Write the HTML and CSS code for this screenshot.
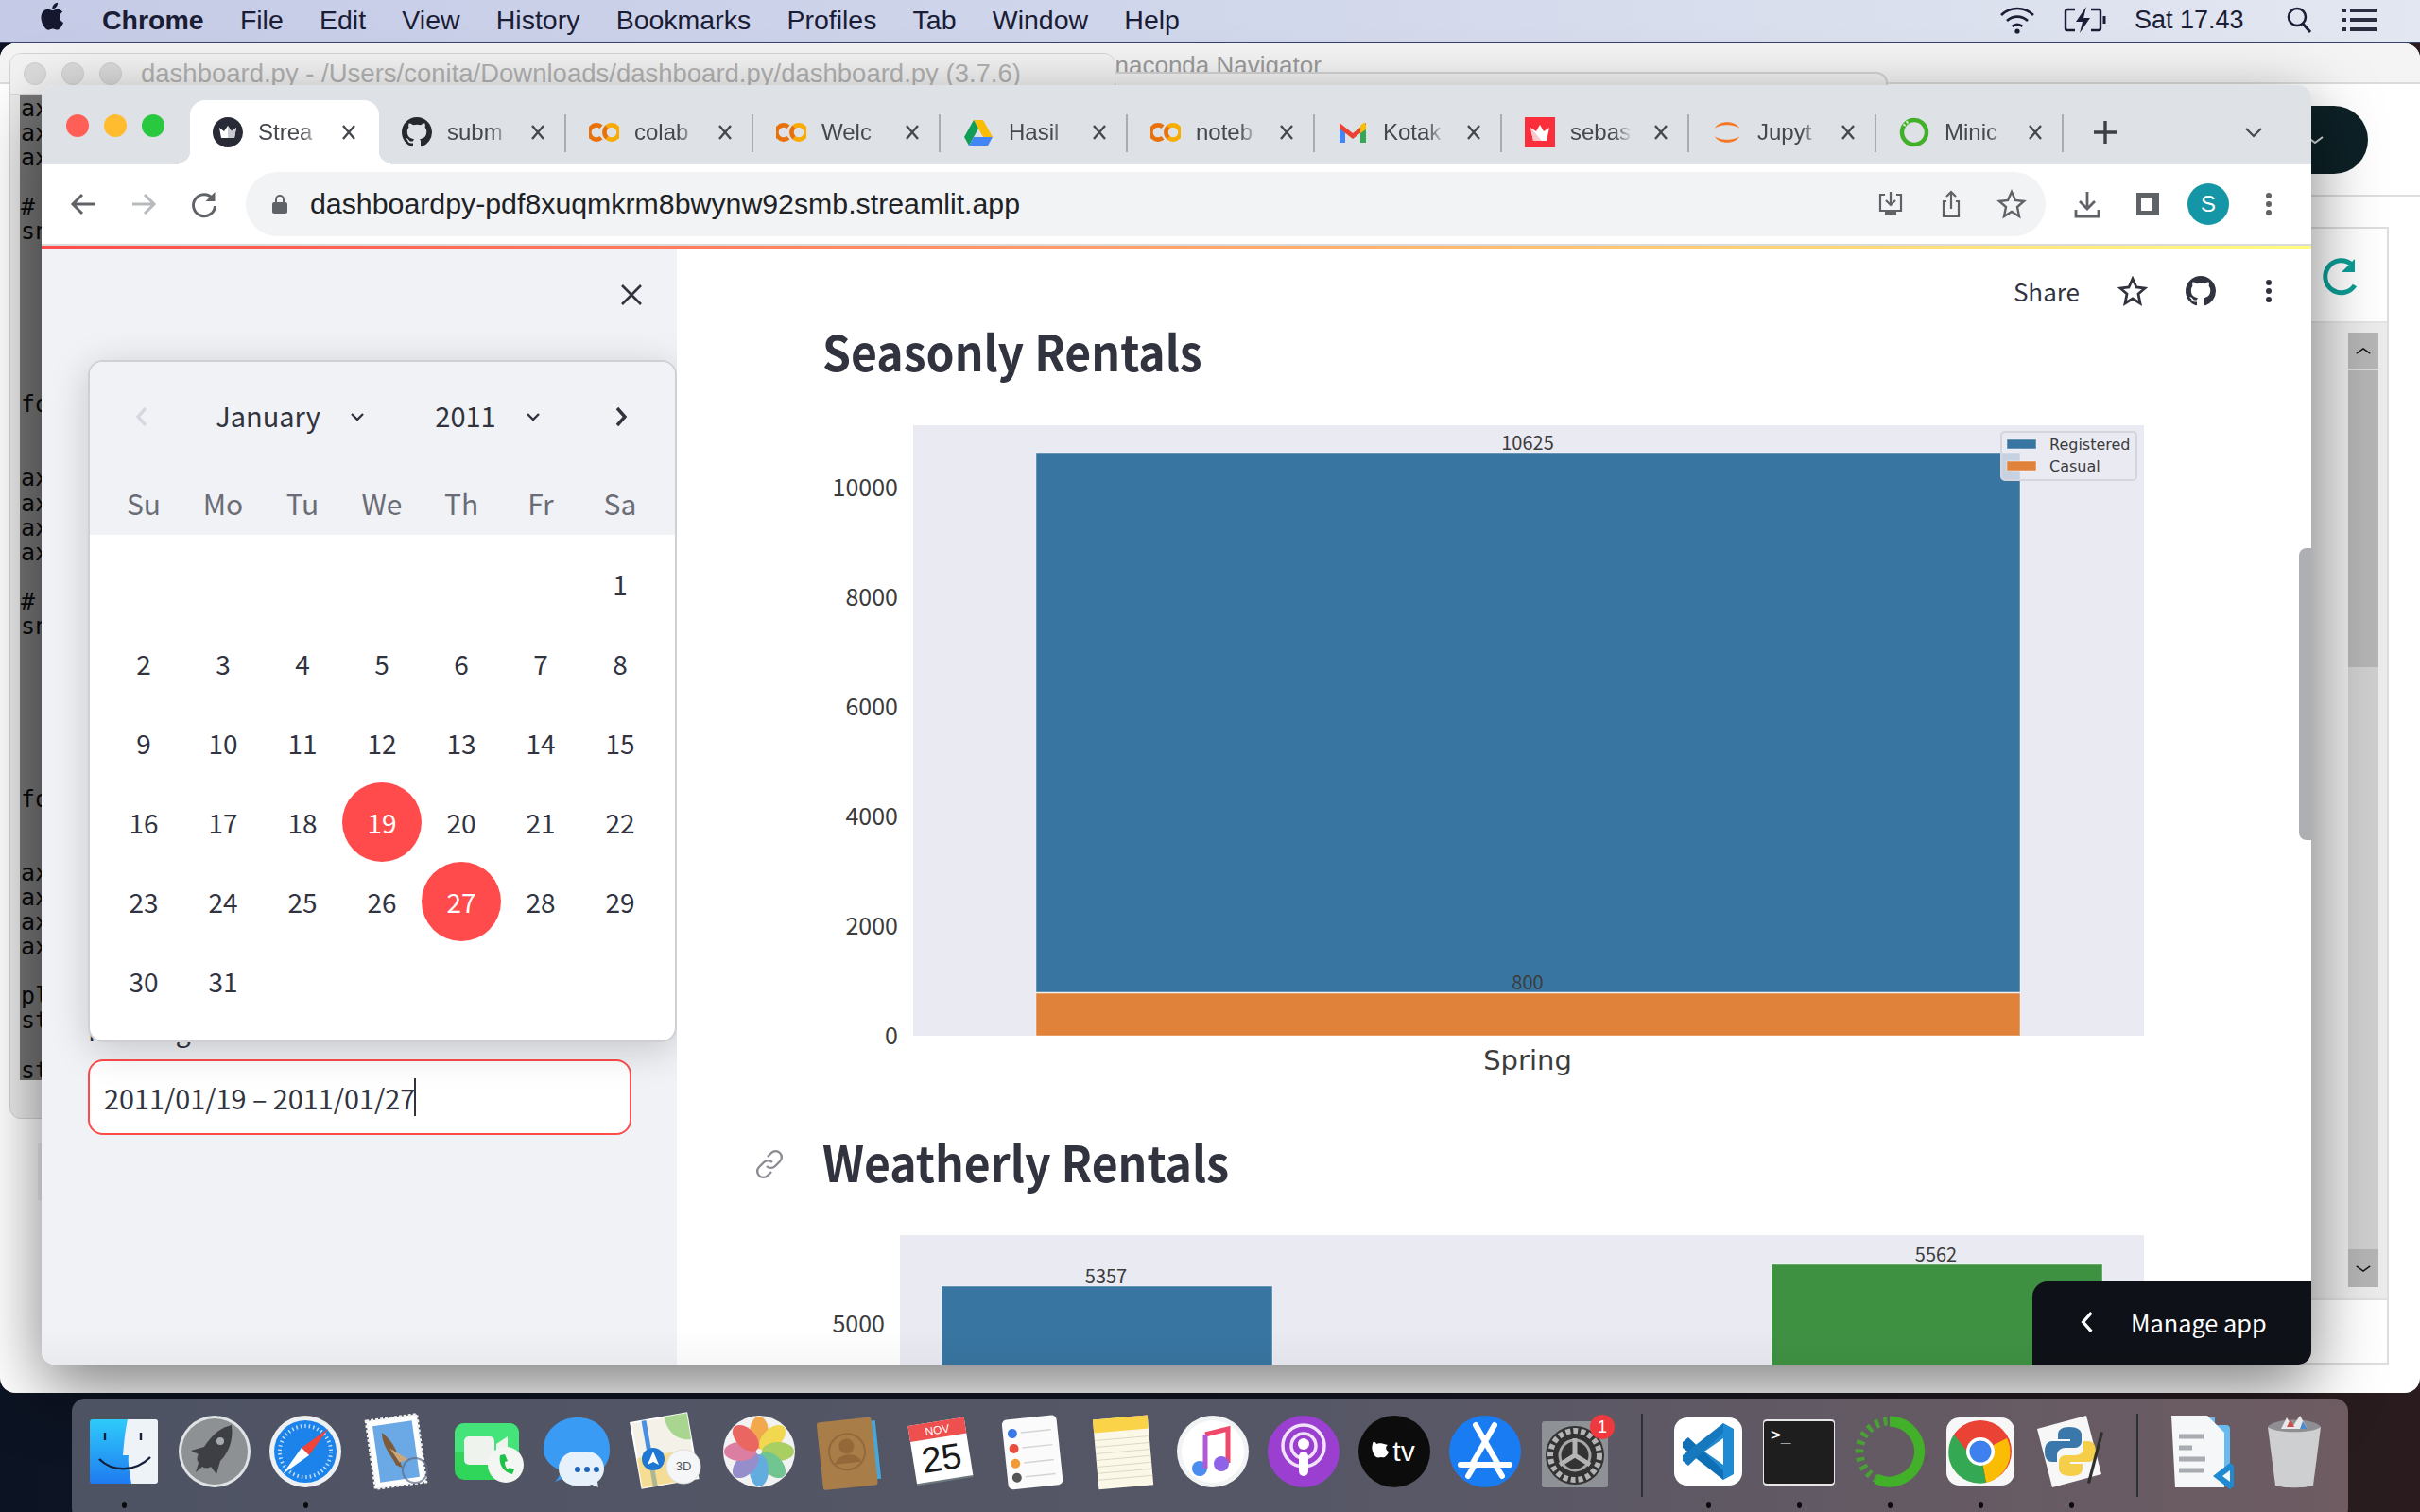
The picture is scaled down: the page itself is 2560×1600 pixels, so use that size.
FILE: index.html
```html
<!DOCTYPE html>
<html lang="en">
<head>
<meta charset="utf-8">
<title>Seasonly Rentals dashboard</title>
<link rel="stylesheet" href="styles.css">
</head>
<body>
<svg class="defs" width="0" height="0" aria-hidden="true">
  <symbol id="gh" viewBox="0 0 16 16"><path d="M8 0C3.58 0 0 3.58 0 8c0 3.54 2.29 6.53 5.47 7.59.4.07.55-.17.55-.38 0-.19-.01-.82-.01-1.49-2.01.37-2.53-.49-2.69-.94-.09-.23-.48-.94-.82-1.13-.28-.15-.68-.52-.01-.53.63-.01 1.08.58 1.23.82.72 1.21 1.87.87 2.33.66.07-.52.28-.87.51-1.07-1.78-.2-3.64-.89-3.64-3.95 0-.87.31-1.59.82-2.15-.08-.2-.36-1.02.08-2.12 0 0 .67-.21 2.2.82.64-.18 1.32-.27 2-.27.68 0 1.36.09 2 .27 1.53-1.04 2.2-.82 2.2-.82.44 1.1.16 1.92.08 2.12.51.56.82 1.27.82 2.15 0 3.07-1.87 3.75-3.65 3.95.29.25.54.73.54 1.48 0 1.07-.01 1.93-.01 2.2 0 .21.15.46.55.38A8.013 8.013 0 0016 8c0-4.42-3.58-8-8-8z"/></symbol>
  <symbol id="co" viewBox="0 0 32 32"><g fill="none" stroke-width="4.6"><path d="M13 10.3a7.6 7.6 0 1 0 0 11.4" stroke="#e8710a"/><path d="M19 10.3a7.6 7.6 0 1 1 0 11.4" stroke="#f9ab00"/><path d="M19 10.3a7.6 7.6 0 0 0 0 11.4" stroke="#e8710a"/></g></symbol>
  <symbol id="x" viewBox="0 0 20 20"><path d="M4 3l12 14M16 3L4 17" fill="none" stroke="#45484d" stroke-width="2.4"/></symbol>
</svg>

<header class="menubar">
  <svg class="apple" viewBox="0 0 24 24"><path d="M17.05 12.04c-.03-2.58 2.11-3.82 2.2-3.88-1.2-1.76-3.07-2-3.74-2.03-1.59-.16-3.11.94-3.91.94-.81 0-2.05-.92-3.37-.89-1.73.03-3.33 1.01-4.23 2.56-1.8 3.13-.46 7.77 1.3 10.31.86 1.24 1.88 2.64 3.22 2.59 1.29-.05 1.78-.84 3.34-.84 1.56 0 2 .84 3.37.81 1.39-.02 2.27-1.26 3.12-2.51.98-1.44 1.39-2.83 1.41-2.9-.03-.01-2.71-1.04-2.74-4.16zM14.5 4.46c.71-.86 1.19-2.06 1.06-3.25-1.02.04-2.26.68-3 1.54-.66.76-1.23 1.98-1.08 3.15 1.14.09 2.31-.58 3.02-1.44z"/></svg>
  <nav class="menus">
    <span class="menu-app">Chrome</span><span>File</span><span>Edit</span><span>View</span><span>History</span><span>Bookmarks</span><span>Profiles</span><span>Tab</span><span>Window</span><span>Help</span>
  </nav>
  <div class="status">
    <svg class="st-wifi" viewBox="0 0 40 32"><g fill="none" stroke="#1a1d35" stroke-width="2.6"><path d="M3 11a24 24 0 0 1 34 0"/><path d="M9 17a16 16 0 0 1 22 0"/><path d="M14.5 23a8 8 0 0 1 11 0"/></g><circle cx="20" cy="28" r="2.6" fill="#1a1d35"/></svg>
    <svg class="st-batt" viewBox="0 0 48 32"><path d="M13 5H5a2 2 0 0 0-2 2v18a2 2 0 0 0 2 2h8M30 5h8a2 2 0 0 1 2 2v18a2 2 0 0 1-2 2h-8" fill="none" stroke="#1a1d35" stroke-width="2.4"/><path d="M25 2L14 18h7l-3 12 11-16h-7z" fill="#1a1d35"/><path d="M44 12v8" stroke="#1a1d35" stroke-width="3"/></svg>
    <span class="st-time">Sat 17.43</span>
    <svg class="st-search" viewBox="0 0 28 30"><circle cx="12" cy="12" r="9" fill="none" stroke="#1a1d35" stroke-width="2.6"/><path d="M18 19l8 9" stroke="#1a1d35" stroke-width="3"/></svg>
    <svg class="st-list" viewBox="0 0 36 28"><g fill="#2a2d40"><rect x="0" y="2" width="4" height="4"/><rect x="8" y="2" width="28" height="4"/><rect x="0" y="12" width="4" height="4"/><rect x="8" y="12" width="28" height="4"/><rect x="0" y="22" width="4" height="4"/><rect x="8" y="22" width="28" height="4"/></g></svg>
  </div>
</header>

<section class="win-nav">
  <div class="win-nav-title">Anaconda Navigator</div>
  <div class="nav-sliver"></div>
  <div class="win-nav-body">
    <div class="nav-right">
      <div class="nav-pill"><svg viewBox="0 0 20 10"><path d="M2 2l8 6 8-6" fill="none" stroke="#d8dee0" stroke-width="2"/></svg></div>
      <div class="nav-rule"></div>
      <div class="nav-panel">
        <div class="nav-panel-top">
          <svg viewBox="0 0 40 42"><path d="M33 8A17 17 0 1 0 36 30" fill="none" stroke="#0d9e97" stroke-width="5"/><path d="M36 2v14H22z" fill="#0d9e97"/></svg>
        </div>
        <div class="nav-panel-mid">
          <div class="nav-scroll">
            <div class="nav-scroll-btn"><svg viewBox="0 0 20 10"><path d="M2 8l8-6 8 6" fill="none" stroke="#111" stroke-width="1.6"/></svg></div>
            <div class="nav-scroll-thumb"></div>
            <div class="nav-scroll-btn nav-scroll-btn--end"><svg viewBox="0 0 20 10"><path d="M2 2l8 6 8-6" fill="none" stroke="#111" stroke-width="1.6"/></svg></div>
          </div>
        </div>
      </div>
    </div>
  </div>
</section>

<section class="win-mid"></section>

<section class="win-idle">
  <div class="idle-title">
    <i class="idle-light"></i><i class="idle-light"></i><i class="idle-light"></i>
    <span class="idle-text">dashboard.py - /Users/conita/Downloads/dashboard.py/dashboard.py (3.7.6)</span>
  </div>
  <pre class="idle-code">ax
ax
ax

#
sn






fo


ax
ax
ax
ax

#
sn






fo


ax
ax
ax
ax

pl
st

st</pre>
</section>

<main class="chrome">
  <div class="tabstrip">
    <div class="lights"><i class="light light--r"></i><i class="light light--y"></i><i class="light light--g"></i></div>
    <div class="tabs">
      <div class="tab tab--active">
        <svg class="fav" viewBox="0 0 32 32"><circle cx="16" cy="16" r="16" fill="#282a36"/><path d="M7 11l5 4 4-6 4 6 5-4-2 11H9z" fill="#fff"/><path d="M16 9l4 6 5-4-2 11h-7z" fill="#c9c9d2"/></svg>
        <span class="tab-title">Strea</span>
        <svg class="tab-x"><use href="#x"/></svg>
      </div>
      <div class="tab">
        <svg class="fav fav--gh"><use href="#gh"/></svg>
        <span class="tab-title">subm</span>
        <svg class="tab-x"><use href="#x"/></svg>
      </div>
      <div class="tab">
        <svg class="fav"><use href="#co"/></svg>
        <span class="tab-title">colab</span>
        <svg class="tab-x"><use href="#x"/></svg>
      </div>
      <div class="tab">
        <svg class="fav"><use href="#co"/></svg>
        <span class="tab-title">Welc</span>
        <svg class="tab-x"><use href="#x"/></svg>
      </div>
      <div class="tab">
        <svg class="fav" viewBox="0 0 32 32"><path d="M11 3h10l10 18H21z" fill="#fbbc04"/><path d="M11 3l5 9-10 18L1 21z" fill="#0f9d58"/><path d="M6 30l5-9h20l-5 9z" fill="#4285f4"/></svg>
        <span class="tab-title">Hasil</span>
        <svg class="tab-x"><use href="#x"/></svg>
      </div>
      <div class="tab">
        <svg class="fav"><use href="#co"/></svg>
        <span class="tab-title">noteb</span>
        <svg class="tab-x"><use href="#x"/></svg>
      </div>
      <div class="tab">
        <svg class="fav" viewBox="0 0 32 32"><path d="M2 8v19h6V14z" fill="#4285f4"/><path d="M24 14v13h6V8z" fill="#34a853"/><path d="M2 6l14 11L30 6v6L16 23 2 12z" fill="#ea4335"/><path d="M24 9l4-3.500L30 8v5l-6 4z" fill="#fbbc04"/></svg>
        <span class="tab-title">Kotak</span>
        <svg class="tab-x"><use href="#x"/></svg>
      </div>
      <div class="tab">
        <svg class="fav" viewBox="0 0 32 32"><rect width="32" height="32" fill="#fb2e3c"/><path d="M6 11l6 4 4-7 4 7 6-4-3 14H9z" fill="#fff"/><path d="M6 11l3 14h9z" fill="#fbc8cc"/></svg>
        <span class="tab-title">sebas</span>
        <svg class="tab-x"><use href="#x"/></svg>
      </div>
      <div class="tab">
        <svg class="fav" viewBox="0 0 32 32"><path d="M3 12C6 3 26 3 29 12 24 7 8 7 3 12zM3 20C6 29 26 29 29 20 24 25 8 25 3 20z" fill="#f37726"/></svg>
        <span class="tab-title">Jupyt</span>
        <svg class="tab-x"><use href="#x"/></svg>
      </div>
      <div class="tab">
        <svg class="fav" viewBox="0 0 32 32"><circle cx="16" cy="16" r="13" fill="none" stroke="#43b02a" stroke-width="4.500"/><path d="M5 9a13 13 0 0 1 6-5" fill="none" stroke="#cfe8c6" stroke-width="3" stroke-dasharray="2 2"/></svg>
        <span class="tab-title">Minic</span>
        <svg class="tab-x"><use href="#x"/></svg>
      </div>
    </div>
    <svg class="tab-plus" viewBox="0 0 32 32"><path d="M16 4v24M4 16h24" stroke="#3c4043" stroke-width="3.400"/></svg>
    <svg class="tab-more" viewBox="0 0 20 12"><path d="M2 2l8 8 8-8" fill="none" stroke="#45484d" stroke-width="2.200"/></svg>
  </div>

  <div class="toolbar">
    <button class="tb-btn" type="button"><svg viewBox="0 0 32 32"><path d="M28 16H6M15 6L5 16l10 10" fill="none" stroke="#5f6368" stroke-width="3"/></svg></button>
    <button class="tb-btn" type="button"><svg viewBox="0 0 32 32"><path d="M4 16h22M17 6l10 10-10 10" fill="none" stroke="#b6b9bd" stroke-width="3"/></svg></button>
    <button class="tb-btn" type="button"><svg viewBox="0 0 32 32"><path d="M25 10a11.500 11.500 0 1 0 2.500 8" fill="none" stroke="#5f6368" stroke-width="3"/><path d="M27.500 3v10h-10z" fill="#5f6368"/></svg></button>
    <div class="omni">
      <svg class="omni-lock" viewBox="0 0 16 22"><path d="M4 9V6a4 4 0 0 1 8 0v3" fill="none" stroke="#5f6368" stroke-width="2"/><rect y="9" width="16" height="12" rx="2" fill="#5f6368"/></svg>
      <span class="omni-url">dashboardpy-pdf8xuqmkrm8bwynw92smb.streamlit.app</span>
      <div class="omni-actions">
        <button class="tb-btn" type="button"><svg viewBox="0 0 32 32"><path d="M10 6H5v17h22V6h-5M16 3v14M11 12l5 5 5-5" fill="none" stroke="#5f6368" stroke-width="2.200"/><path d="M10 23h12v5H10z" fill="#5f6368"/></svg></button>
        <button class="tb-btn" type="button"><svg viewBox="0 0 32 32"><path d="M11 13H8v16h16V13h-3M16 21V3M11 8l5-5 5 5" fill="none" stroke="#5f6368" stroke-width="2.200"/></svg></button>
        <button class="tb-btn" type="button"><svg viewBox="0 0 32 32"><path d="M16 3l4 9 9 1-7 6 2 10-8-5-8 5 2-10-7-6 9-1z" fill="none" stroke="#5f6368" stroke-width="2.400"/></svg></button>
      </div>
    </div>
    <div class="tb-end">
      <button class="tb-btn" type="button"><svg viewBox="0 0 32 32"><path d="M16 3v18M8 13l8 8 8-8M4 22v7h24v-7" fill="none" stroke="#5f6368" stroke-width="2.800"/></svg></button>
      <button class="tb-btn" type="button"><svg viewBox="0 0 32 32"><path d="M4 4h24v24H4zM9 9v14h11V9z" fill="#5f6368" fill-rule="evenodd"/></svg></button>
      <button class="tb-btn" type="button"><span class="avatar">S</span></button>
      <button class="tb-btn" type="button"><svg viewBox="0 0 32 32"><g fill="#5f6368"><circle cx="16" cy="7" r="3"/><circle cx="16" cy="16" r="3"/><circle cx="16" cy="25" r="3"/></g></svg></button>
    </div>
  </div>

  <div class="loadbar"></div>

  <div class="page">
    <aside class="sidebar">
      <div class="side-close"><svg viewBox="0 0 24 24"><path d="M2 2l20 20M22 2L2 22" fill="none" stroke="#31333f" stroke-width="2.600"/></svg></div>
      <label class="side-label">Rentang Waktu</label>
      <div class="date-input"><span>2011/01/19 – 2011/01/27</span><i class="caret"></i></div>

      <div class="cal">
        <div class="cal-head">
          <div class="cal-nav">
            <span class="cal-arrow"><svg viewBox="0 0 14 22"><path d="M11 2L3 11l8 9" fill="none" stroke="#d6d9e2" stroke-width="3.400"/></svg></span>
            <span class="cal-sel cal-sel--month">January<svg viewBox="0 0 16 10"><path d="M2 2l6 6 6-6" fill="none" stroke="#31333f" stroke-width="2.400"/></svg></span>
            <span class="cal-sel cal-sel--year">2011<svg viewBox="0 0 16 10"><path d="M2 2l6 6 6-6" fill="none" stroke="#31333f" stroke-width="2.400"/></svg></span>
            <span class="cal-arrow cal-arrow--next"><svg viewBox="0 0 14 22"><path d="M3 2l8 9-8 9" fill="none" stroke="#31333f" stroke-width="3.400"/></svg></span>
          </div>
          <div class="cal-week">
            <span>Su</span><span>Mo</span><span>Tu</span><span>We</span><span>Th</span><span>Fr</span><span>Sa</span>
          </div>
        </div>
        <div class="cal-days">
          <span></span><span></span><span></span><span></span><span></span><span></span><span>1</span>
          <span>2</span><span>3</span><span>4</span><span>5</span><span>6</span><span>7</span><span>8</span>
          <span>9</span><span>10</span><span>11</span><span>12</span><span>13</span><span>14</span><span>15</span>
          <span>16</span><span>17</span><span>18</span><span class="day-on">19</span><span>20</span><span>21</span><span>22</span>
          <span>23</span><span>24</span><span>25</span><span>26</span><span class="day-on">27</span><span>28</span><span>29</span>
          <span>30</span><span>31</span>
        </div>
      </div>
    </aside>

    <div class="content">
      <div class="st-head">
        <span class="st-share">Share</span>
        <svg viewBox="0 0 32 32"><path d="M16 3l4 9 9 1-7 6 2 10-8-5-8 5 2-10-7-6 9-1z" fill="none" stroke="#31333f" stroke-width="2.800"/></svg>
        <svg class="st-gh"><use href="#gh"/></svg>
        <svg viewBox="0 0 32 32"><g fill="#31333f"><circle cx="16" cy="7" r="3"/><circle cx="16" cy="16" r="3"/><circle cx="16" cy="25" r="3"/></g></svg>
      </div>

      <div class="h-row h-row--plain"><h2>Seasonly Rentals</h2></div>
      <svg class="chart chart--one" viewBox="0 0 1400 690">
        <rect class="plot" x="96" y="0" width="1302" height="646"/>
        <rect class="bar-blue" x="226" y="29" width="1041" height="571"/>
        <rect class="bar-orange" x="226" y="601" width="1041" height="45"/>
        <text class="tick" x="80" y="75">10000</text>
        <text class="tick" x="80" y="191">8000</text>
        <text class="tick" x="80" y="307">6000</text>
        <text class="tick" x="80" y="423">4000</text>
        <text class="tick" x="80" y="539">2000</text>
        <text class="tick" x="80" y="655">0</text>
        <text class="val" x="746" y="26">10625</text>
        <text class="val" x="746" y="597">800</text>
        <text class="cat" x="746" y="682">Spring</text>
        <rect class="legend" x="1247" y="7" width="143" height="51" rx="4"/>
        <rect class="bar-blue" x="1253" y="15" width="31" height="10"/>
        <rect class="bar-orange" x="1253" y="38" width="31" height="10"/>
        <text class="leg" x="1298" y="26">Registered</text>
        <text class="leg" x="1298" y="49">Casual</text>
      </svg>

      <div class="h-row">
        <svg class="h-link" viewBox="0 0 32 34"><g fill="none" stroke="#8a8b93" stroke-width="2.400"><path d="M14 9l4-4a6.300 6.300 0 0 1 9 9l-5 5a6.300 6.300 0 0 1-9 0"/><path d="M18 25l-4 4a6.300 6.300 0 0 1-9-9l5-5a6.300 6.300 0 0 1 9 0"/></g></svg>
        <h2>Weatherly Rentals</h2>
      </div>
      <svg class="chart chart--two" viewBox="0 0 1400 140">
        <rect class="plot" x="82" y="0" width="1316" height="140"/>
        <rect class="bar-blue" x="126" y="54" width="350" height="86"/>
        <rect class="bar-green" x="1004" y="31" width="350" height="109"/>
        <text class="tick" x="66" y="103">5000</text>
        <text class="val" x="300" y="51">5357</text>
        <text class="val" x="1178" y="28">5562</text>
      </svg>

      <div class="page-scroll"></div>
      <div class="manage"><svg viewBox="0 0 14 22"><path d="M11 2L3 11l8 9" fill="none" stroke="#fff" stroke-width="3"/></svg><span>Manage app</span></div>
    </div>
  </div>
  <div class="win-fade"></div>
</main>

<footer class="dock">
  <div class="dock-item dock-item--on"><svg viewBox="0 0 84 84"><defs><linearGradient id="fb" x1="0" y1="0" x2="0" y2="1"><stop offset="0" stop-color="#2ecbfb"/><stop offset="1" stop-color="#1f7bf0"/></linearGradient></defs><rect x="6" y="8" width="72" height="68" rx="3" fill="url(#fb)"/><path d="M46 8h29a3 3 0 0 1 3 3v62a3 3 0 0 1-3 3H50c-2-14-4-22-3-30h-6c1-12 2-24 5-38z" fill="#eef3f8"/><path d="M22 22v8M60 22v8" stroke="#14203a" stroke-width="2.400"/><path d="M16 50c14 14 38 14 54-2" fill="none" stroke="#14203a" stroke-width="2.400"/></svg><i class="dot"></i></div>
  <div class="dock-item"><svg viewBox="0 0 84 84"><circle cx="42" cy="42" r="38" fill="#dfe3e6"/><circle cx="42" cy="42" r="35" fill="#8d9194"/><path d="M60 14c2 14-2 28-12 38l-4 14-6-8c-3 2-6 2-9 0l-7 6 3-10c-2-3-2-6 0-9l-8-4 14-4c8-12 16-20 29-23z" fill="#3d3f44"/><circle cx="48" cy="31" r="4" fill="#a7abae"/></svg></div>
  <div class="dock-item dock-item--on"><svg viewBox="0 0 84 84"><circle cx="42" cy="42" r="38" fill="#eef1f4"/><circle cx="42" cy="42" r="33" fill="#1c83ea"/><circle cx="42" cy="42" r="27" fill="none" stroke="#bfdcf7" stroke-width="4" stroke-dasharray="1.500 3"/><path d="M66 18L46 46 38 38z" fill="#f0433a"/><path d="M18 66l20-28 8 8z" fill="#fff"/></svg><i class="dot"></i></div>
  <div class="dock-item"><svg viewBox="0 0 84 84"><g transform="rotate(-8 42 42)"><rect x="15" y="6" width="54" height="72" fill="#fff" stroke="#f2f2f2" stroke-dasharray="3 2" stroke-width="3"/><rect x="21" y="12" width="42" height="60" fill="#6aa8e6"/><path d="M30 20c8 8 14 20 16 40l-6-4c-4-12-12-22-10-36z" fill="#7b5b3b"/><path d="M36 38l18 14-10 2z" fill="#c9a77c"/></g><circle cx="62" cy="62" r="13" fill="none" stroke="#5f6a85" stroke-width="2" opacity=".7"/></svg></div>
  <div class="dock-item"><svg viewBox="0 0 84 84"><rect x="8" y="12" width="68" height="60" rx="10" fill="#2fd65a"/><path d="M8 22a10 10 0 0 1 10-10h48a10 10 0 0 1 10 10v20H8z" fill="#45e47a"/><rect x="18" y="26" width="32" height="30" rx="5" fill="#eef3ee"/><path d="M52 34l12-8v30l-12-8z" fill="#eef3ee"/><circle cx="62" cy="56" r="19" fill="#f4f6f3"/><path d="M56 46c-2 10 4 18 13 20l2-5-5-2-2 2c-2-2-3-5-3-8l3-1-3-7z" fill="#1ec24a"/></svg></div>
  <div class="dock-item"><svg viewBox="0 0 84 84"><path d="M42 6c20 0 34 14 34 34 0 10-4 18-12 24l-32 4-14 6c4-4 6-8 6-12C14 58 6 50 6 40 6 20 22 6 42 6z" fill="#3a9bf5"/><path d="M62 42c10 0 18 8 18 18 0 6-3 11-7 14l1 6-7-3c-2 1-4 1-6 1H50c-10 0-18-8-18-18s8-18 18-18z" transform="translate(-10 0)" fill="#e6f1fb"/><g fill="#1d64b8"><circle cx="42" cy="61" r="3"/><circle cx="52" cy="61" r="3"/><circle cx="62" cy="61" r="3"/></g></svg></div>
  <div class="dock-item"><svg viewBox="0 0 84 84"><g transform="rotate(-10 38 42)"><rect x="8" y="6" width="60" height="70" fill="#f4f1e8" stroke="#fff" stroke-width="2"/><path d="M44 6h24v28c-14 0-24-12-24-28z" fill="#a8d58f"/><path d="M22 6v70" stroke="#4a90e2" stroke-width="5"/><path d="M8 44h40v32H8z" fill="#f6d15e" opacity=".6"/></g><circle cx="26" cy="50" r="12" fill="#1e77d2"/><path d="M26 42l6 14-6-3-6 3z" fill="#fff"/><circle cx="58" cy="58" r="18" fill="#f5f6f7" stroke="#ddd"/><text class="dk-3d" x="58" y="62">3D</text></svg></div>
  <div class="dock-item"><svg viewBox="0 0 84 84"><circle cx="42" cy="42" r="38" fill="#f2f2f2"/><g opacity=".88"><ellipse cx="42" cy="22" rx="10" ry="17" fill="#f29f38"/><ellipse cx="42" cy="22" rx="10" ry="17" fill="#f2d43a" transform="rotate(45 42 42)"/><ellipse cx="42" cy="22" rx="10" ry="17" fill="#9fca4e" transform="rotate(90 42 42)"/><ellipse cx="42" cy="22" rx="10" ry="17" fill="#5fbf83" transform="rotate(135 42 42)"/><ellipse cx="42" cy="22" rx="10" ry="17" fill="#4fa3dc" transform="rotate(180 42 42)"/><ellipse cx="42" cy="22" rx="10" ry="17" fill="#8a80c8" transform="rotate(225 42 42)"/><ellipse cx="42" cy="22" rx="10" ry="17" fill="#d86f96" transform="rotate(270 42 42)"/><ellipse cx="42" cy="22" rx="10" ry="17" fill="#e9534c" transform="rotate(315 42 42)"/></g></svg></div>
  <div class="dock-item"><svg viewBox="0 0 84 84"><g transform="rotate(-6 42 42)"><rect x="66" y="12" width="6" height="62" fill="#49a7d8"/><rect x="10" y="8" width="58" height="72" rx="3" fill="#a97d48"/><circle cx="39" cy="42" r="19" fill="none" stroke="#94693a" stroke-width="2"/><circle cx="39" cy="36" r="8" fill="#94693a"/><path d="M25 54c4-12 24-12 28 0" fill="#94693a"/></g></svg></div>
  <div class="dock-item"><svg viewBox="0 0 84 84"><g transform="rotate(-9 42 42)"><rect x="12" y="12" width="60" height="62" fill="#6c7a80"/><rect x="12" y="10" width="60" height="62" fill="#fff"/><rect x="12" y="10" width="60" height="17" fill="#ee5050"/><text class="dk-nov" x="42" y="23">NOV</text><text class="dk-25" x="42" y="62">25</text></g></svg></div>
  <div class="dock-item"><svg viewBox="0 0 84 84"><g transform="rotate(-6 42 42)"><rect x="14" y="6" width="58" height="74" rx="5" fill="#fbfbfb"/><circle cx="24" cy="21" r="5" fill="#3b7be8"/><circle cx="24" cy="37" r="5" fill="#ea4d3e"/><circle cx="24" cy="53" r="5" fill="#f19a38"/><circle cx="24" cy="68" r="5" fill="#555"/><path d="M33 21h32M33 37h32M33 53h32M33 68h32" stroke="#d5d5d5" stroke-width="1.500"/></g></svg></div>
  <div class="dock-item"><svg viewBox="0 0 84 84"><g transform="rotate(-5 42 42)"><rect x="14" y="6" width="58" height="74" fill="#fbf8e8"/><rect x="14" y="6" width="58" height="14" fill="#fbd348"/><path d="M14 28h58M14 35h58M14 42h58M14 49h58M14 56h58M14 63h58M14 70h58" stroke="#ddd8c4"/></g></svg></div>
  <div class="dock-item"><svg viewBox="0 0 84 84"><circle cx="42" cy="42" r="38" fill="#f1f3f5"/><circle cx="42" cy="42" r="33" fill="#fff"/><path d="M34 24l24-6v36" fill="none" stroke="#f0486a" stroke-width="5"/><circle cx="28" cy="60" r="8" fill="#4a8cf0"/><circle cx="51" cy="55" r="8" fill="#8f63e8"/><path d="M34 24v36" stroke="#b25ad6" stroke-width="5"/></svg></div>
  <div class="dock-item"><svg viewBox="0 0 84 84"><circle cx="42" cy="42" r="38" fill="#9a3fd0"/><g fill="none" stroke="#f0e2f8" stroke-width="3.500"><circle cx="42" cy="36" r="22"/><circle cx="42" cy="36" r="13"/></g><circle cx="42" cy="34" r="6" fill="#fff"/><rect x="37" y="42" width="10" height="26" rx="5" fill="#fff"/></svg></div>
  <div class="dock-item"><svg viewBox="0 0 84 84"><circle cx="42" cy="42" r="38" fill="#0c0c0c"/><path d="M31 34c-2-1-6-1-8 0-1-3-4-3-4 0-2 5 1 12 4 14 2 1 3 0 5 0s3 1 5-1c2-2 3-4 3-5-3-1-4-5-1-7z" fill="#fff"/><text class="dk-tv" x="52" y="52">tv</text></svg></div>
  <div class="dock-item"><svg viewBox="0 0 84 84"><circle cx="42" cy="42" r="38" fill="#1a7cf3"/><path d="M32 14l24 42M52 14L28 56M16 56h52M24 68l6-10M60 68l-6-10" stroke="#fff" stroke-width="6" stroke-linecap="round"/></svg></div>
  <div class="dock-item"><svg viewBox="0 0 84 84"><rect x="6" y="10" width="70" height="70" rx="3" fill="#8e9296"/><circle cx="41" cy="46" r="31" fill="#333"/><circle cx="41" cy="46" r="26" fill="none" stroke="#b4b4b4" stroke-width="6" stroke-dasharray="5 3"/><circle cx="41" cy="46" r="16" fill="none" stroke="#a7a7a7" stroke-width="3"/><path d="M41 46V28M41 46l-16 10M41 46l16 10" stroke="#b4b4b4" stroke-width="5"/><circle cx="70" cy="16" r="13" fill="#ee3a3f"/><text class="dk-badge" x="70" y="22">1</text></svg></div>
  <i class="dock-sep"></i>
  <div class="dock-item dock-item--on"><svg viewBox="0 0 84 84"><rect x="6" y="6" width="72" height="72" rx="14" fill="#fff"/><path d="M58 12L28 42 58 72l11-6V18z" fill="#1f8ad2"/><path d="M58 28v28L38 42z" fill="#fff"/><path d="M15 32l6-5 37 35v10L15 38z" fill="#0f6fb5"/><path d="M15 52l6 5 37-35V12L15 46z" fill="#1678bd"/></svg><i class="dot"></i></div>
  <div class="dock-item dock-item--on"><svg viewBox="0 0 84 84"><rect x="4" y="8" width="76" height="70" rx="4" fill="#e6e6e6"/><rect x="5" y="10" width="74" height="66" rx="3" fill="#1e1e1e"/><text class="dk-term" x="12" y="30">&gt;_</text></svg><i class="dot"></i></div>
  <div class="dock-item dock-item--on"><svg viewBox="0 0 84 84"><path d="M42 10a32 32 0 1 1-14 61" fill="none" stroke="#43b02a" stroke-width="11"/><circle cx="42" cy="42" r="32" fill="none" stroke="#43b02a" stroke-width="9" stroke-dasharray="4 5" opacity=".8"/></svg><i class="dot"></i></div>
  <div class="dock-item dock-item--on"><svg viewBox="0 0 84 84"><rect x="6" y="6" width="72" height="72" rx="14" fill="#f7f7f7"/><circle cx="42" cy="42" r="33" fill="#ea4335"/><path d="M42 42l28-14a33 33 0 0 1-22 47z" fill="#fbbc04"/><path d="M42 42l6 33A33 33 0 0 1 14 24z" fill="#34a853"/><path d="M42 27h28a33 33 0 0 0-56-3l14 18z" fill="#ea4335"/><circle cx="42" cy="42" r="15" fill="#fff"/><circle cx="42" cy="42" r="11.500" fill="#3d80ee"/></svg><i class="dot"></i></div>
  <div class="dock-item dock-item--on"><svg viewBox="0 0 84 84"><path d="M6 18L58 4l16 62-52 14z" fill="#f7f7f7"/><path d="M40 16c-8 0-12 3-12 8v5h13v2H22c-6 0-8 5-8 11s2 11 8 11h5v-7c0-5 4-8 9-8h10c4 0 7-3 7-7v-7c0-5-5-8-13-8z" fill="#3a78ab"/><path d="M42 68c8 0 12-3 12-8v-5H41v-2h19c6 0 8-5 8-11s-2-11-8-11h-5v7c0 5-4 8-9 8H36c-4 0-7 3-7 7v7c0 5 5 8 13 8z" fill="#f5cf4a"/><path d="M76 22L62 76l-3-1 14-54z" fill="#2f2f2f"/></svg><i class="dot"></i></div>
  <i class="dock-sep"></i>
  <div class="dock-item"><svg viewBox="0 0 84 84"><path d="M20 6h34v8h12a4 4 0 0 1 4 4v44H14V12z" fill="#69bbef"/><path d="M8 4h38l18 18v58H12z" fill="#f5f7f9"/><path d="M16 26h26M16 38h14M16 50h28M16 62h26" stroke="#a8abaf" stroke-width="5"/><path d="M70 54L52 68l18 14 4-3V57z" fill="#1f8ad2"/><path d="M70 62v12l-8-6z" fill="#f5f7f9"/></svg></div>
  <div class="dock-item"><svg viewBox="0 0 84 84"><path d="M14 16h56l-8 62c-8 3-32 3-40 0z" fill="#dfe3e5" opacity=".85"/><path d="M14 16c6-10 50-10 56 0-8 7-48 7-56 0z" fill="#8f8f93"/><path d="M28 18l6-12 6 10 8-12 8 14z" fill="#e8e8ea"/><path d="M34 16l4-8 4 8z" fill="#c94f4f"/><path d="M48 18l3-8 5 8z" fill="#4e8bc9"/></svg></div>
</footer>
</body>
</html>
```

FILE: styles.css
```css
* { box-sizing: border-box; }
html, body { margin: 0; padding: 0; }
body {
  position: relative;
  width: 2560px;
  height: 1600px;
  overflow: hidden;
  background: linear-gradient(90deg, #0c1322 0%, #121522 55%, #2a1c1e 100%);
  font-family: "Liberation Sans", Arial, sans-serif;
  color: #31333f;
}
.defs { position: absolute; }
button { border: 0; background: none; padding: 0; }

/* menu bar */
.menubar {
  display: flex;
  align-items: center;
  height: 46px;
  padding: 0 46px 2px 39px;
  border-bottom: 2px solid #3d4263;
  background: linear-gradient(90deg, #c5cbe6 0%, #cfd5ea 45%, #e3e7f1 100%);
  color: #1a1d35;
  font-size: 28.5px;
}
.apple { width: 34px; height: 38px; fill: #14172e; margin-top: -6px; }
.menus { display: flex; gap: 38.2px; margin-left: 35px; }
.menu-app { font-weight: 700; }
.status { display: flex; align-items: center; gap: 28px; margin-left: auto; }
.st-wifi { width: 40px; height: 32px; }
.st-batt { width: 48px; height: 32px; }
.st-time { width: 116px; white-space: nowrap; font-size: 27px; }
.st-search { width: 28px; height: 30px; margin-left: 16px; }
.st-list { width: 36px; height: 28px; margin-left: 4px; }

/* windows behind */
.win-nav {
  position: absolute;
  left: 0; top: 46px;
  width: 2560px; height: 1428px;
  border-radius: 16px;
  background: #fff;
  overflow: hidden;
}
.win-nav-title {
  height: 43px;
  padding-top: 5px;
  border-bottom: 2px solid #dcdcdc;
  background: #f4f4f4;
  color: #9b9b9b;
  font-size: 26px;
  text-align: center;
  line-height: 36px;
}
.nav-sliver {
  position: absolute;
  left: 40px; top: 1164px;
  width: 6px; height: 60px;
  background: #f2f2f2;
}
.win-nav-body { display: flex; justify-content: flex-end; }
.nav-right { display: flex; flex-direction: column; width: 160px; }
.nav-pill {
  display: flex;
  align-items: center;
  justify-content: flex-end;
  width: 105px;
  height: 72px;
  margin-top: 23px;
  padding-right: 46px;
  border-radius: 0 36px 36px 0;
  background: #0d2126;
}
.nav-pill svg { width: 20px; height: 10px; }
.nav-rule { height: 2px; margin-top: 22px; background: #dedede; }
.nav-panel {
  display: flex;
  flex-direction: column;
  width: 127px;
  height: 1204px;
  margin-top: 32px;
  border: 2px solid #dedede;
  border-left: 0;
  background: #fff;
}
.nav-panel-top { height: 100px; padding: 30px 0 0 55px; border-bottom: 2px solid #e4e4e4; }
.nav-panel-top svg { width: 40px; height: 42px; display: block; }
.nav-panel-mid { height: 1034px; padding: 10px 0 0 84px; background: #ececec; border-bottom: 2px solid #e0e0e0; }
.nav-scroll { display: flex; flex-direction: column; width: 32px; height: 1010px; background: #cfcfcf; }
.nav-scroll-btn { display: flex; align-items: center; justify-content: center; height: 40px; background: #b5b5b5; border-bottom: 2px solid #dcdcdc; }
.nav-scroll-btn svg { width: 18px; height: 9px; }
.nav-scroll-btn--end { margin-top: auto; border-bottom: 0; }
.nav-scroll-thumb { height: 314px; background: #b5b5b5; }

.win-mid {
  position: absolute;
  left: 1100px; top: 76px;
  width: 897px; height: 300px;
  border: 2px solid #d3d3d3;
  border-radius: 0 12px 0 0;
  background: #f2f2f2;
}
.win-idle {
  position: absolute;
  left: 10px; top: 56px;
  width: 1170px; height: 1128px;
  border-radius: 12px;
  border: 1px solid #d4d4d4;
  background: #ececec;
  overflow: hidden;
}
.idle-title {
  display: flex;
  align-items: center;
  gap: 16px;
  height: 44px;
  padding-left: 14px;
  background: #f3f3f3;
  border-bottom: 2px solid #dadada;
}
.idle-light { width: 24px; height: 24px; border-radius: 50%; background: #dcdcdc; border: 1px solid #cfcfcf; }
.idle-text { margin-left: 4px; color: #b3b3b3; font-size: 27.5px; white-space: nowrap; }
.idle-code {
  height: 1042px;
  margin: 0 0 0 10px;
  padding: 1px 0 0 1px;
  background: #767676;
  color: #0a0a0a;
  font-family: "DejaVu Sans Mono", monospace;
  font-size: 25px;
  line-height: 26.1px;
}

/* chrome window */
.chrome {
  position: absolute;
  left: 44px; top: 90px;
  width: 2401px; height: 1354px;
  display: flex;
  flex-direction: column;
  border-radius: 14px;
  overflow: hidden;
  background: #fff;
  box-shadow: 0 24px 70px rgba(0,0,0,.5);
}
.tabstrip {
  display: flex;
  align-items: flex-start;
  height: 84px;
  padding: 16px 51px 0 0;
  background: #dee1e6;
}
.lights { display: flex; gap: 16px; width: 157px; padding: 15px 0 0 26px; }
.light { width: 24px; height: 24px; border-radius: 50%; }
.light--r { background: #ff5f57; }
.light--y { background: #febc2e; }
.light--g { background: #28c840; }
.tabs { display: flex; }
.tab {
  position: relative;
  display: flex;
  align-items: center;
  width: 198px;
  height: 68px;
  padding-left: 24px;
}
.tab::after {
  content: "";
  position: absolute;
  right: 0; top: 15px;
  width: 2px; height: 40px;
  background: #a9acb1;
}
.tab--active { width: 200px; background: #fff; border-radius: 16px 16px 0 0; }
.tab--active::after { display: none; }
.tab--active::before {
  content: "";
  position: absolute;
  left: -12px; right: -12px; bottom: 0;
  height: 14px;
  background:
    radial-gradient(circle at 0 0, #dee1e6 12px, #fff 12.5px) left bottom / 12px 14px no-repeat,
    radial-gradient(circle at 100% 0, #dee1e6 12px, #fff 12.5px) right bottom / 12px 14px no-repeat;
}
.fav { width: 32px; height: 32px; flex: none; }
.fav--gh { fill: #24292f; }
.tab-title {
  width: 66px;
  margin: 0 20px 0 16px;
  white-space: nowrap;
  color: #45484d;
  font-size: 24px;
  -webkit-mask-image: linear-gradient(90deg, #000 70%, transparent 100%);
  mask-image: linear-gradient(90deg, #000 70%, transparent 100%);
}
.tab-x { width: 20px; height: 20px; flex: none; }
.tab-plus { width: 32px; height: 32px; margin: 18px 0 0 28px; }
.tab-more { width: 20px; height: 12px; margin: 28px 0 0 auto; }

.toolbar {
  display: flex;
  align-items: center;
  height: 84px;
  padding-left: 12px;
  background: #fff;
}
.tb-btn {
  display: flex;
  align-items: center;
  justify-content: center;
  width: 64px;
  height: 64px;
  flex: none;
}
.tb-btn svg { width: 32px; height: 32px; }
.omni {
  display: flex;
  align-items: center;
  width: 1904px;
  height: 68px;
  margin-left: 12px;
  padding: 0 4px 0 28px;
  border-radius: 34px;
  background: #f1f3f4;
}
.omni-lock { width: 16px; height: 22px; }
.omni-url { margin-left: 24px; color: #202124; font-size: 30.3px; white-space: nowrap; }
.omni-actions { display: flex; margin-left: auto; }
.tb-end { display: flex; margin-left: 12px; }
.avatar {
  display: flex;
  align-items: center;
  justify-content: center;
  width: 44px;
  height: 44px;
  border-radius: 50%;
  background: #1596a6;
  color: #fff;
  font-size: 24px;
}
.loadbar {
  height: 6px;
  border-top: 2px solid #dadada;
  background: linear-gradient(90deg, #ff4b4b 0%, #ffa36b 50%, #fffd80 100%);
  background-origin: border-box;
}

.page { display: flex; flex: 1; min-height: 0; font-family: "Noto Sans CJK SC", "Source Sans Pro", sans-serif; }

/* sidebar */
.sidebar {
  position: relative;
  display: flex;
  flex-direction: column;
  width: 672px;
  flex: none;
  padding: 0 48px 0 49px;
  background: #f0f2f6;
}
.side-close { display: flex; justify-content: flex-end; margin-right: -12px; padding-top: 36px; }
.side-close svg { width: 24px; height: 24px; display: block; }
.side-label { margin-top: 748px; height: 49px; font-size: 28px; line-height: 36px; }
.date-input {
  display: flex;
  align-items: center;
  height: 80px;
  padding-left: 15px;
  border: 2px solid #ff4b4b;
  border-radius: 16px;
  background: #fff;
  font-size: 28.8px;
}
.caret { width: 2px; height: 40px; margin-left: -1px; background: #31333f; }

.cal {
  position: absolute;
  left: 49px; top: 117px;
  width: 623px; height: 722px;
  display: flex;
  flex-direction: column;
  border: 2px solid #cfd0d6;
  border-radius: 16px;
  background: #fff;
  overflow: hidden;
  box-shadow: 0 8px 40px rgba(0,0,0,.18);
}
.cal-head { height: 183px; background: #f0f2f6; }
.cal-nav { display: flex; align-items: center; height: 115px; }
.cal-arrow { display: flex; justify-content: center; width: 110px; }
.cal-arrow svg { width: 14px; height: 22px; }
.cal-arrow--next { width: 68px; }
.cal-sel { display: flex; align-items: center; justify-content: center; gap: 31px; margin-bottom: 4px; font-size: 29px; }
.cal-sel svg { width: 16px; height: 10px; margin-top: 4px; }
.cal-sel--month { width: 204px; }
.cal-sel--year { width: 214px; }
.cal-week, .cal-days { display: grid; grid-template-columns: repeat(7, 84px); padding-left: 15px; }
.cal-week { height: 68px; align-items: center; padding-bottom: 1px; color: #6b6d76; font-size: 30px; }
.cal-week span { text-align: center; }
.cal-days { grid-auto-rows: 84px; padding-top: 10px; font-size: 28px; }
.cal-days span { display: flex; align-items: center; justify-content: center; border-radius: 50%; }
.day-on { background: #ff4b4b; color: #fff; }

/* main */
.content {
  position: relative;
  flex: 1;
  min-width: 0;
  padding: 80px 0 0 82px;
  overflow: hidden;
  background: #fff;
}
.st-head {
  position: absolute;
  right: 29px; top: 24px;
  display: flex;
  align-items: center;
  gap: 40px;
}
.st-head svg { width: 32px; height: 32px; }
.st-head .st-gh { fill: #31333f; }
.st-share { font-size: 26px; line-height: 40px; }
.h-row { display: flex; align-items: center; gap: 40px; height: 60px; }
.h-row--plain { padding-left: 72px; }
.h-row h2 {
  margin: 0 0 6px;
  color: #31333f;
  font-size: 52px;
  font-weight: 700;
  line-height: 60px;
  white-space: nowrap;
  transform: scaleX(.925);
  transform-origin: left center;
}
.h-link { width: 32px; height: 34px; }
.chart { display: block; margin-left: 72px; width: 1400px; }
.chart--one { height: 690px; margin-top: 46px; margin-bottom: 62px; }
.chart--two { height: 140px; margin-top: 45px; }
.plot { fill: #eaeaf2; }
.bar-blue { fill: #3875a1; stroke: rgba(255,255,255,.45); stroke-width: 1; }
.bar-orange { fill: #e1823a; stroke: rgba(255,255,255,.45); stroke-width: 1; }
.bar-green { fill: #3f9142; stroke: rgba(255,255,255,.45); stroke-width: 1; }
.tick { fill: #3c3c3c; font-size: 25px; text-anchor: end; }
.val { fill: #3c3c3c; font-size: 20px; text-anchor: middle; }
.cat { fill: #3c3c3c; font-size: 29px; text-anchor: middle; font-family: "DejaVu Sans", sans-serif; }
.legend { fill: rgba(234,234,242,.8); stroke: #d5d5de; stroke-width: 2; }
.leg { fill: #3c3c3c; font-family: "DejaVu Sans", sans-serif; font-size: 16px; }
.page-scroll {
  position: absolute;
  right: 0; top: 316px;
  width: 13px; height: 309px;
  border-radius: 8px 0 0 8px;
  background: #aeafb3;
}
.manage {
  position: absolute;
  right: 0; bottom: 0;
  display: flex;
  align-items: center;
  width: 295px;
  height: 88px;
  padding: 0 0 2px 50px;
  border-radius: 16px 0 0 0;
  background: #0e1117;
  color: #fff;
  font-size: 25.3px;
}
.manage svg { width: 16px; height: 24px; margin-right: 38px; }
.win-fade {
  position: absolute;
  left: 0; right: 0; bottom: 0;
  height: 40px;
  background: linear-gradient(180deg, transparent, rgba(0,0,0,.03));
  pointer-events: none;
}

/* dock */
.dock {
  position: absolute;
  left: 76px; top: 1480px;
  width: 2408px; height: 130px;
  display: flex;
  padding: 14px 0 0 7px;
  border-radius: 14px;
  background: linear-gradient(90deg, #4e5363 0%, #565766 55%, #6e5c62 100%);
}
.dock-item { display: flex; flex-direction: column; align-items: center; width: 96px; flex: none; }
.dock-item svg { width: 84px; height: 84px; display: block; }
.dot { width: 5px; height: 7px; margin-top: 11px; border-radius: 50%; background: #0a0a0a; }
.dock-sep { width: 2px; height: 88px; margin: 2px 21px 0 21px; background: #2d2f38; flex: none; }
.dk-3d { font-family: "Liberation Sans", sans-serif; font-size: 13px; text-anchor: middle; fill: #555; }
.dk-nov { font-family: "Liberation Sans", sans-serif; font-size: 12px; text-anchor: middle; fill: #fff; }
.dk-25 { font-family: "Liberation Sans", sans-serif; font-size: 38px; text-anchor: middle; fill: #1a1a1a; }
.dk-tv { font-family: "Liberation Sans", sans-serif; font-size: 30px; text-anchor: middle; fill: #fff; }
.dk-badge { font-family: "Liberation Sans", sans-serif; font-size: 18px; text-anchor: middle; fill: #fff; }
.dk-term { font-family: "DejaVu Sans Mono", monospace; font-size: 18px; fill: #fff; }
```
